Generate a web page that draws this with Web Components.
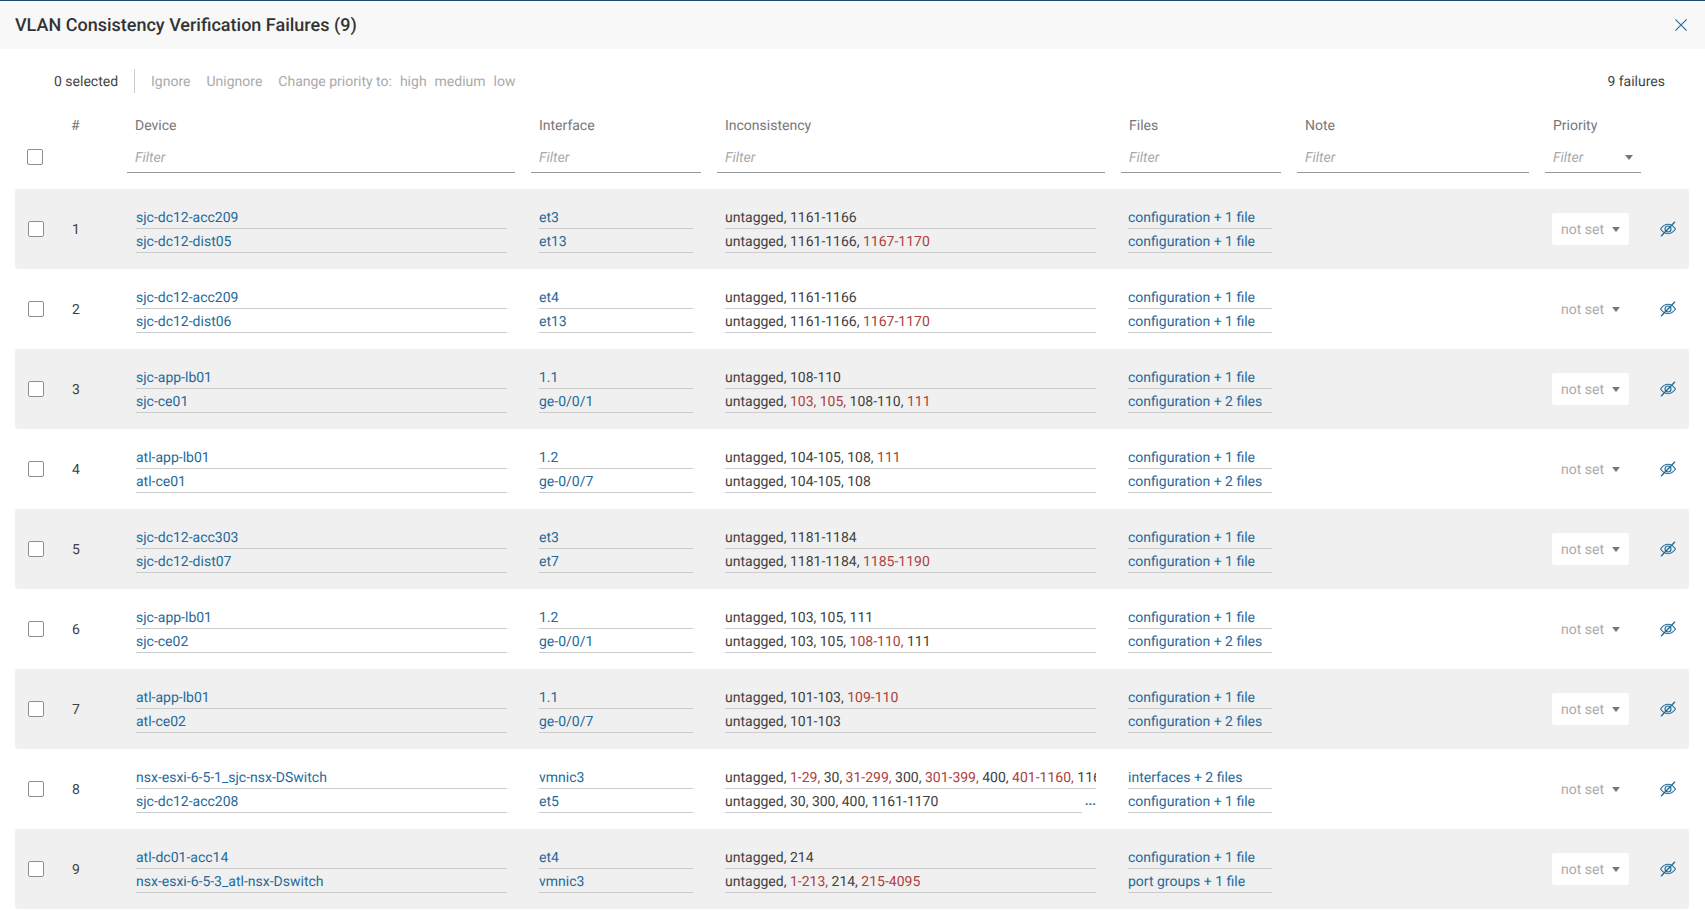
<!DOCTYPE html>
<html>
<head>
	<meta charset="utf-8">
	<title>VLAN Consistency Verification Failures</title>
	<style>
		html, body{
			margin: 0;
			height: 100%;
			background: #fff;
			overflow: hidden;
		}
		body{
			font: 14px/24px Roboto, "Liberation Sans", sans-serif;
			text-rendering: geometricPrecision;
			color: #404040;
			--cols: 41px 39px 388px 170px 388px 160px 232px 96px 33px;
			--link: #1f6a9a;
		}
	</style>
</head>
<body>

	<template id="tpl-dialog">
		<style>
			:host{
				display: block;
				height: 911px;
				box-sizing: border-box;
				border-top: 1px solid #1d4a72;
			}
			header{
				display: flex;
				align-items: center;
				justify-content: space-between;
				height: 48px;
				padding: 0 18px 0 15px;
				background: #f8f8f8;
			}
			h1{
				margin: 0;
				padding-top: 2px;
				font-size: 18px;
				font-weight: 500;
				color: #333;
			}
			svg{ display: block; }
		</style>
		<header>
			<h1><slot name="title"></slot></h1>
			<svg width="12" height="12" viewBox="0 0 12 12" fill="none" stroke="#1f6a9a" stroke-width="1.1"><path d="M0.4 0.4 11.6 11.6M11.6 0.4 0.4 11.6"/></svg>
		</header>
		<slot></slot>
	</template>

	<template id="tpl-toolbar">
		<style>
			:host{
				display: flex;
				align-items: flex-start;
				height: 24px;
				padding: 20px 40px 20px 54px;
				line-height: 26px;
				color: #aaa;
			}
			.sel{
				height: 24px;
				color: #444;
				padding-right: 16px;
				border-right: 1px solid #ccc;
				margin-right: 16px;
			}
			.sp{ margin-right: 16px; }
			.pr{ margin-right: 8px; }
			.count{
				margin-left: auto;
				color: #444;
			}
		</style>
		<span class="sel">0 selected</span>
		<span class="sp">Ignore</span>
		<span class="sp">Unignore</span>
		<span class="pr">Change priority to:</span>
		<span class="pr">high</span>
		<span class="pr">medium</span>
		<span>low</span>
		<span class="count"><slot></slot></span>
	</template>

	<template id="tpl-head">
		<style>
			:host{
				display: grid;
				grid-template-columns: var(--cols);
				column-gap: 16px;
				grid-template-rows: 24px 39px;
				margin: 0 15px;
				line-height: 26px;
				color: #777;
				height: 76px;
			}
			.lbl{ padding-left: 8px; }
			.num{ margin-left: -1px; }
			.cb{ grid-column: 1; grid-row: 2; margin: 12px 0 0 12px; }
		</style>
		<span></span>
		<span class="num">#</span>
		<span class="lbl">Device</span>
		<span class="lbl">Interface</span>
		<span class="lbl">Inconsistency</span>
		<span class="lbl">Files</span>
		<span class="lbl">Note</span>
		<span class="lbl">Priority</span>
		<span></span>
		<check-box class="cb"></check-box>
		<span></span>
		<filter-input></filter-input>
		<filter-input></filter-input>
		<filter-input></filter-input>
		<filter-input></filter-input>
		<filter-input></filter-input>
		<filter-input caret></filter-input>
	</template>

	<template id="tpl-filter">
		<style>
			:host{
				display: flex;
				align-items: center;
				justify-content: space-between;
				height: 29px;
				padding: 0 8px;
				margin-top: 6px;
				border-bottom: 1px solid #999;
				line-height: 24px;
				font-style: italic;
				color: #aaa;
			}
			i{
				display: none;
				width: 0;
				height: 0;
				border: 4px solid transparent;
				border-top: 5px solid #777;
				border-bottom: 0;
			}
			:host([caret]) i{ display: block; }
		</style>
		<span>Filter</span><i></i>
	</template>

	<template id="tpl-check">
		<style>
			:host{
				display: block;
				width: 16px;
				height: 16px;
				box-sizing: border-box;
				border: 1px solid #8f8f8f;
				border-radius: 2px;
				background: #fff;
			}
		</style>
	</template>

	<template id="tpl-row">
		<style>
			:host{
				display: grid;
				grid-template-columns: var(--cols);
				column-gap: 16px;
				align-items: center;
				height: 80px;
				margin: 0 16px 0 15px;
				border-radius: 3px;
			}
			:host(:nth-child(odd)){ background: #f0f0f0; }
			check-box{ margin-left: 13px; }
			#n{ padding-top: 2px; }
			.cell{ padding: 0 8px; }
			.dev{ padding-left: 9px; }
			.vl{ padding-right: 9px; }
			.fl{ padding: 0 9px 0 7px; }
			.pri{
				display: flex;
				align-items: center;
				justify-content: space-between;
				width: 77px;
				height: 32px;
				box-sizing: border-box;
				margin-left: 7px;
				padding: 0 9px;
				border-radius: 3px;
				background: #fff;
				color: #aaa;
			}
			.pri span{ padding-top: 2px; }
			.pri i{
				width: 0;
				height: 0;
				border: 4px solid transparent;
				border-top: 5px solid #777;
				border-bottom: 0;
			}
			svg{ display: block; margin-left: 3px; }
		</style>
		<check-box></check-box>
		<span id="n"></span>
		<div class="cell dev"><slot name="device"></slot></div>
		<div class="cell"><slot name="iface"></slot></div>
		<div class="cell vl"><slot name="vlans"></slot></div>
		<div class="cell fl"><slot name="files"></slot></div>
		<span></span>
		<div class="pri"><span>not set</span><i></i></div>
		<svg width="16" height="16" viewBox="0 0 16 16" fill="none" stroke="#1f6a9a" stroke-width="1.1"><path d="M0.5 8C3 4.6 5.5 3.3 8 3.3S13 4.6 15.5 8C13 11.4 10.5 12.7 8 12.7S3 11.4 0.5 8Z"/><circle cx="8" cy="8" r="3"/><path d="M1 15.2 15 0.8" stroke-width="1.3"/></svg>
	</template>

	<template id="tpl-line">
		<style>
			:host{
				display: block;
				height: 24px;
				box-sizing: border-box;
				border-bottom: 1px solid #ccc;
				line-height: 26px;
				white-space: nowrap;
				overflow: hidden;
				color: #404040;
			}
			:host([link]){ color: var(--link); }
		</style>
		<slot></slot>
	</template>

	<template id="tpl-bad">
		<style>
			:host{ color: #ae4040; }
		</style>
		<slot></slot>
	</template>

	<template id="tpl-more">
		<style>
			:host{
				display: flex;
				height: 24px;
				line-height: 26px;
			}
			.t{
				flex: 1;
				min-width: 0;
				box-sizing: border-box;
				border-bottom: 1px solid #ccc;
				white-space: nowrap;
				overflow: hidden;
				color: #404040;
			}
			.d{
				width: 14px;
				text-align: right;
				font-weight: 700;
				font-size: 13px;
				color: var(--link);
			}
		</style>
		<div class="t"><slot></slot></div>
		<div class="d">...</div>
	</template>

	<vlan-dialog>
		<span slot="title">VLAN Consistency Verification Failures (9)</span>
		<fail-toolbar>9 failures</fail-toolbar>
		<fail-head></fail-head>
		<fail-rows>
			<fail-row n="1">
				<row-line slot="device" link>sjc-dc12-acc209</row-line><row-line slot="device" link>sjc-dc12-dist05</row-line>
				<row-line slot="iface" link>et3</row-line><row-line slot="iface" link>et13</row-line>
				<row-line slot="vlans">untagged, 1161-1166</row-line><row-line slot="vlans">untagged, 1161-1166, <bad-vlan>1167-1170</bad-vlan></row-line>
				<row-line slot="files" link>configuration + 1 file</row-line><row-line slot="files" link>configuration + 1 file</row-line>
			</fail-row>
			<fail-row n="2">
				<row-line slot="device" link>sjc-dc12-acc209</row-line><row-line slot="device" link>sjc-dc12-dist06</row-line>
				<row-line slot="iface" link>et4</row-line><row-line slot="iface" link>et13</row-line>
				<row-line slot="vlans">untagged, 1161-1166</row-line><row-line slot="vlans">untagged, 1161-1166, <bad-vlan>1167-1170</bad-vlan></row-line>
				<row-line slot="files" link>configuration + 1 file</row-line><row-line slot="files" link>configuration + 1 file</row-line>
			</fail-row>
			<fail-row n="3">
				<row-line slot="device" link>sjc-app-lb01</row-line><row-line slot="device" link>sjc-ce01</row-line>
				<row-line slot="iface" link>1.1</row-line><row-line slot="iface" link>ge-0/0/1</row-line>
				<row-line slot="vlans">untagged, 108-110</row-line><row-line slot="vlans">untagged, <bad-vlan>103, 105,</bad-vlan> 108-110, <bad-vlan>111</bad-vlan></row-line>
				<row-line slot="files" link>configuration + 1 file</row-line><row-line slot="files" link>configuration + 2 files</row-line>
			</fail-row>
			<fail-row n="4">
				<row-line slot="device" link>atl-app-lb01</row-line><row-line slot="device" link>atl-ce01</row-line>
				<row-line slot="iface" link>1.2</row-line><row-line slot="iface" link>ge-0/0/7</row-line>
				<row-line slot="vlans">untagged, 104-105, 108, <bad-vlan>111</bad-vlan></row-line><row-line slot="vlans">untagged, 104-105, 108</row-line>
				<row-line slot="files" link>configuration + 1 file</row-line><row-line slot="files" link>configuration + 2 files</row-line>
			</fail-row>
			<fail-row n="5">
				<row-line slot="device" link>sjc-dc12-acc303</row-line><row-line slot="device" link>sjc-dc12-dist07</row-line>
				<row-line slot="iface" link>et3</row-line><row-line slot="iface" link>et7</row-line>
				<row-line slot="vlans">untagged, 1181-1184</row-line><row-line slot="vlans">untagged, 1181-1184, <bad-vlan>1185-1190</bad-vlan></row-line>
				<row-line slot="files" link>configuration + 1 file</row-line><row-line slot="files" link>configuration + 1 file</row-line>
			</fail-row>
			<fail-row n="6">
				<row-line slot="device" link>sjc-app-lb01</row-line><row-line slot="device" link>sjc-ce02</row-line>
				<row-line slot="iface" link>1.2</row-line><row-line slot="iface" link>ge-0/0/1</row-line>
				<row-line slot="vlans">untagged, 103, 105, 111</row-line><row-line slot="vlans">untagged, 103, 105, <bad-vlan>108-110,</bad-vlan> 111</row-line>
				<row-line slot="files" link>configuration + 1 file</row-line><row-line slot="files" link>configuration + 2 files</row-line>
			</fail-row>
			<fail-row n="7">
				<row-line slot="device" link>atl-app-lb01</row-line><row-line slot="device" link>atl-ce02</row-line>
				<row-line slot="iface" link>1.1</row-line><row-line slot="iface" link>ge-0/0/7</row-line>
				<row-line slot="vlans">untagged, 101-103, <bad-vlan>109-110</bad-vlan></row-line><row-line slot="vlans">untagged, 101-103</row-line>
				<row-line slot="files" link>configuration + 1 file</row-line><row-line slot="files" link>configuration + 2 files</row-line>
			</fail-row>
			<fail-row n="8">
				<row-line slot="device" link>nsx-esxi-6-5-1_sjc-nsx-DSwitch</row-line><row-line slot="device" link>sjc-dc12-acc208</row-line>
				<row-line slot="iface" link>vmnic3</row-line><row-line slot="iface" link>et5</row-line>
				<row-line slot="vlans">untagged, <bad-vlan>1-29,</bad-vlan> 30, <bad-vlan>31-299,</bad-vlan> 300, <bad-vlan>301-399,</bad-vlan> 400, <bad-vlan>401-1160,</bad-vlan> 1161-1170</row-line><more-line slot="vlans">untagged, 30, 300, 400, 1161-1170</more-line>
				<row-line slot="files" link>interfaces + 2 files</row-line><row-line slot="files" link>configuration + 1 file</row-line>
			</fail-row>
			<fail-row n="9">
				<row-line slot="device" link>atl-dc01-acc14</row-line><row-line slot="device" link>nsx-esxi-6-5-3_atl-nsx-Dswitch</row-line>
				<row-line slot="iface" link>et4</row-line><row-line slot="iface" link>vmnic3</row-line>
				<row-line slot="vlans">untagged, 214</row-line><row-line slot="vlans">untagged, <bad-vlan>1-213,</bad-vlan> 214, <bad-vlan>215-4095</bad-vlan></row-line>
				<row-line slot="files" link>configuration + 1 file</row-line><row-line slot="files" link>port groups + 1 file</row-line>
			</fail-row>
		</fail-rows>
	</vlan-dialog>

	<script type="text/javascript">
		// each element only clones its template into an open shadow root
		function plain(name, tplId){
			class El extends HTMLElement{
				constructor(){
					super();
					this.attachShadow({mode:'open'});
					this.shadowRoot.appendChild(document.getElementById(tplId).content.cloneNode(true));
				}
			}
			customElements.define(name, El);
		}

		plain('vlan-dialog', 'tpl-dialog');
		plain('fail-toolbar', 'tpl-toolbar');
		plain('fail-head', 'tpl-head');
		plain('filter-input', 'tpl-filter');
		plain('check-box', 'tpl-check');
		plain('row-line', 'tpl-line');
		plain('bad-vlan', 'tpl-bad');
		plain('more-line', 'tpl-more');

		class FailRows extends HTMLElement{
			constructor(){
				super();
				this.attachShadow({mode:'open'});
				this.shadowRoot.innerHTML = '<style>:host{display:block}</style><slot></slot>';
			}
		}
		customElements.define('fail-rows', FailRows);

		class FailRow extends HTMLElement{
			constructor(){
				super();
				this.attachShadow({mode:'open'});
				this.shadowRoot.appendChild(document.getElementById('tpl-row').content.cloneNode(true));
			}
			connectedCallback(){
				this.shadowRoot.getElementById('n').textContent = this.getAttribute('n');
			}
		}
		customElements.define('fail-row', FailRow);
	</script>

</body>
</html>
